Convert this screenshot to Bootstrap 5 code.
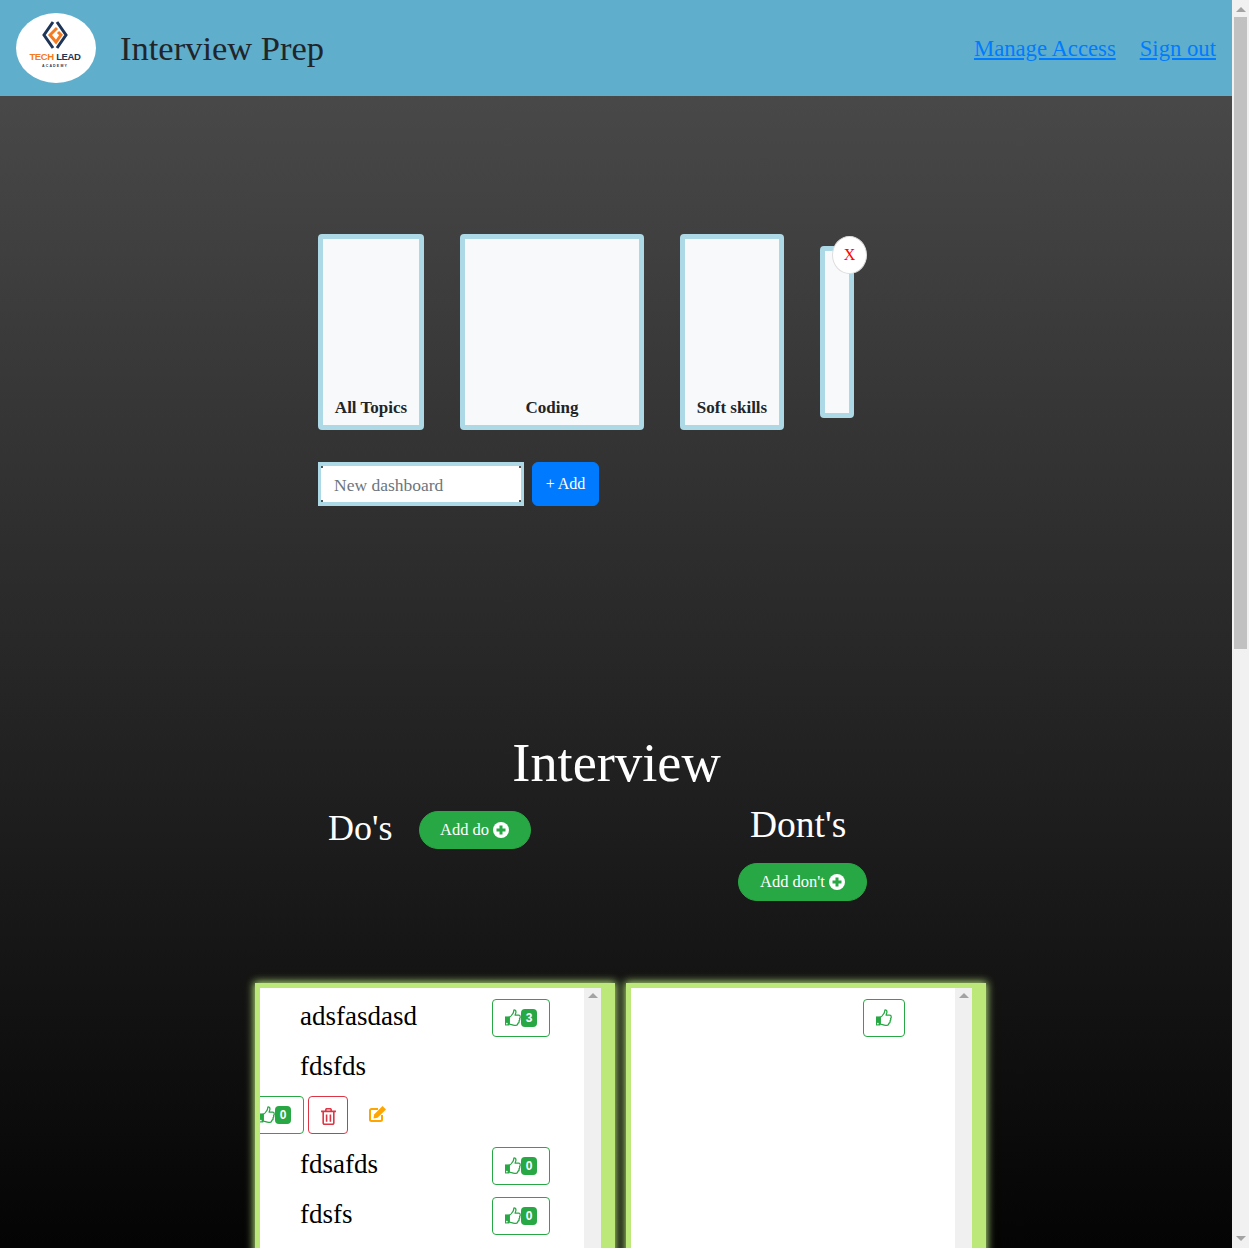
<!DOCTYPE html>
<html lang="en">
<head>
  <meta charset="UTF-8">
  <meta name="viewport" content="width=device-width, initial-scale=1.0">
  <title>Interview Prep</title>
  <link href="https://cdn.jsdelivr.net/npm/bootstrap@5.3.0/dist/css/bootstrap.min.css" rel="stylesheet">
  <script src="https://cdn.jsdelivr.net/npm/bootstrap@5.3.0/dist/js/bootstrap.bundle.min.js"></script>
  <style>
    body {
      font-family: "Liberation Serif", serif;
      background: linear-gradient(#4e4e4e, #040404) fixed;
    }
    .app-shell { height: 100vh; overflow: hidden; }
    .app-col { min-width: 0; }

    /* drawn scrollbars */
    .rail { width: 17px; background: #f1f1f1; padding: 7px 0; }
    .rail-up { width: 0; height: 0; border: 5px solid transparent; border-top: 0; border-bottom-color: #a3a3a3; }
    .rail-down { width: 0; height: 0; border: 5px solid transparent; border-bottom: 0; border-top-color: #a3a3a3; margin-top: auto; }
    .rail-thumb { width: 13px; height: 632px; background: #c1c1c1; margin-top: 5px; }
    .pane-rail { width: 17px; background: #f0f0f0; padding-top: 5px; }

    .top-bar { height: 96px; background: #5faecb; padding: 0 16px; }
    .logo-oval { width: 80px; height: 70px; border-radius: 50%; background: #fff; line-height: 1; padding: 0 2px 8px 0; }
    .logo-main { font: 700 9.5px "Liberation Sans", sans-serif; letter-spacing: -.35px; color: #f47b20; margin-top: 1px; }
    .logo-main span { color: #1f3557; }
    .logo-sub { font: 700 3.5px "Liberation Sans", sans-serif; letter-spacing: 1.2px; color: #1f3557; margin-top: 2px; }
    .app-title { font-size: 34.5px; color: #212529; margin: 2px 0 0 24px; font-weight: 400; }
    .top-nav { padding-top: 2px; }
    .top-link { font-size: 22.7px; color: #007bff; }

    .board-wrap { width: 596px; margin: 0 auto; padding-top: 138px; }
    .board-row { gap: 36px; height: 196px; }
    .board-tile {
      border: 5px solid #add8e6; border-radius: 4px; background: #f8f9fa;
      padding: 0 12px 5px; font-size: 17px; font-weight: 700; color: #212529; white-space: nowrap;
    }
    .tile-a { width: 106px; }
    .tile-b { width: 184px; }
    .tile-c { width: 104px; }
    .tile-d { width: 34px; height: 172px; }
    .tile-close {
      position: absolute; top: -15px; left: 7px; width: 35px; height: 38px; border-radius: 50%;
      background: #fff; border: 1px solid #ddd; color: #f00; font-size: 16px; font-weight: 400;
    }
    .add-row { margin-top: 32px; gap: 8px; }
    .board-input {
      width: 206px; height: 44px; border-style: solid; border-color: #add8e6; border-width: 4px 3px; border-radius: 0;
      padding: 2px 13px 0; font-size: 17.5px; outline: 0;
      background:
        linear-gradient(#555, #555) 0 0 / 2px 2px no-repeat,
        linear-gradient(#555, #555) 100% 0 / 2px 2px no-repeat,
        linear-gradient(#555, #555) 0 100% / 2px 2px no-repeat,
        linear-gradient(#555, #555) 100% 100% / 2px 2px no-repeat,
        #fff;
    }
    .board-input::placeholder { color: #6c757d; }
    .board-add { width: 67px; height: 44px; background: #007bff; border-color: #007bff; font-size: 16px; padding: 0; }

    .page-head { font-size: 54.4px; color: #fff; text-align: center; margin: 226px 0 0 1px; line-height: 62px; font-weight: 400; }
    .col-head { color: #fff; margin: 0; font-weight: 400; line-height: 47px; }
    .head-row { height: 189px; }
    .do-head { padding: 11px 0 0 328px; width: 616px; gap: 26px; }
    .do-head .col-head { font-size: 36px; }
    .do-head .add-pill { margin-top: 6px; padding: 0 20.5px; }
    .dont-head { padding: 7px 0 0 134px; }
    .dont-head .col-head { font-size: 37.5px; }
    .dont-head .add-pill { margin: 15px 0 0 -12px; }
    .add-pill {
      background: #28a745; border-color: #28a745; color: #fff; height: 38px; font-size: 16.5px;
      border-radius: 19px; padding: 0 21px; gap: 4px;
    }
    .pill-icon { width: 16px; height: 16px; }

    .lists-row { padding-left: 255px; gap: 11px; }
    .green-frame {
      width: 360px; height: 700px; background: #bce879; padding: 5px 14px 5px 5px;
      box-shadow: 0 0 8px 1px #b9e87a;
    }
    .list-pane { background: #fff; overflow: hidden; min-width: 0; }
    .item-line { height: 50px; padding: 11px 34px 0 40px; font-size: 27px; color: #000; line-height: 34px; }
    .item-line.tall { height: 98px; }
    .like-btn {
      width: 58px; height: 38px; border: 1px solid #28a745; border-radius: 4px; background: #fff;
      color: #28a745; padding: 0; gap: 0;
    }
    .like-btn svg { width: 17px; height: 17px; margin: -2px -1px 0 0; }
    .like-num {
      background: #28a745; color: #fff; border-radius: 4px; width: 16px; height: 18px;
      font: 700 12px "Liberation Sans", sans-serif;
    }
    .like-solo { width: 42px; margin-right: 16px; }
    .act-row { margin: 13px 0 0 -54px; gap: 4px; height: 38px; }
    .del-btn { width: 40px; height: 38px; border: 1px solid #dc3545; border-radius: 4px; background: #fff; padding: 0; color: #dc3545; }
    .del-btn svg { width: 15px; height: 17px; margin-top: -3px; }
    .edit-mark { width: 17px; height: 16px; margin: -2px 0 0 17px; color: #ffa500; }
  </style>
</head>
<body>
  <!-- thumb icon used by the like buttons -->
  <svg class="d-none">
    <symbol id="thumb" viewBox="0 0 512 512">
      <path fill="currentColor" d="M0 224h130v272H0z"/>
      <circle cx="56" cy="440" r="26" fill="#fff"/>
      <path fill="#fff" stroke="currentColor" stroke-width="38" stroke-linejoin="round" d="M130 236H150C178 236 208 165 235 138C263 110 254 62 273 28C320 28 330 62 330 92C330 131 305 150 305 188H409C436 188 460 210 460 238C460 260 450 275 438 285C452 310 445 340 422 352C432 390 415 425 385 435C390 470 365 490 330 490H292C220 490 180 452 130 452Z"/>
    </symbol>
  </svg>

  <div class="app-shell d-flex">
    <div class="app-col flex-grow-1">
      <header class="top-bar d-flex align-items-center">
        <div class="logo-oval d-flex flex-column align-items-center justify-content-center flex-shrink-0">
          <svg width="26" height="30" viewBox="0 0 26 30">
            <path fill="none" stroke="#1f3557" stroke-width="3" d="M11 2 2 15l9 13M15 2l9 13-9 13"/>
            <path fill="none" stroke="#f47b20" stroke-width="3" d="M15 8 8 15l6 7 5-7-3-3"/>
          </svg>
          <div class="logo-main">TECH <span>LEAD</span></div>
          <div class="logo-sub">ACADEMY</div>
        </div>
        <h1 class="app-title">Interview Prep</h1>
        <nav class="top-nav ms-auto d-flex gap-4">
          <a class="top-link" href="#">Manage Access</a>
          <a class="top-link" href="#">Sign out</a>
        </nav>
      </header>

      <main>
        <section class="board-wrap">
          <div class="board-row d-flex align-items-center">
            <div class="board-tile tile-a h-100 d-flex align-items-end justify-content-center">All Topics</div>
            <div class="board-tile tile-b h-100 d-flex align-items-end justify-content-center">Coding</div>
            <div class="board-tile tile-c h-100 d-flex align-items-end justify-content-center">Soft skills</div>
            <div class="board-tile tile-d position-relative">
              <div class="tile-close d-flex align-items-center justify-content-center">X</div>
            </div>
          </div>
          <form class="add-row d-flex">
            <input class="board-input" type="text" placeholder="New dashboard">
            <button type="button" class="btn btn-primary board-add">+ Add</button>
          </form>
        </section>

        <h2 class="page-head">Interview</h2>
        <div class="head-row d-flex">
          <div class="do-head d-flex align-items-start">
            <h3 class="col-head">Do's</h3>
            <button class="btn add-pill d-flex align-items-center">Add do
              <svg class="pill-icon" viewBox="0 0 16 16"><circle cx="8" cy="8" r="8" fill="#fff"/><path d="M3.5 6.500h3v-3h3v3h3v3h-3v3h-3v-3h-3z" fill="#28a745"/></svg>
            </button>
          </div>
          <div class="dont-head">
            <h3 class="col-head">Dont's</h3>
            <button class="btn add-pill d-flex align-items-center">Add don't
              <svg class="pill-icon" viewBox="0 0 16 16"><circle cx="8" cy="8" r="8" fill="#fff"/><path d="M3.5 6.500h3v-3h3v3h3v3h-3v3h-3v-3h-3z" fill="#28a745"/></svg>
            </button>
          </div>
        </div>

        <div class="lists-row d-flex">
          <div class="green-frame d-flex">
            <div class="list-pane flex-grow-1">
              <div class="item-line d-flex justify-content-between">adsfasdasd
                <button class="like-btn d-flex align-items-center justify-content-center"><svg><use href="#thumb"/></svg><span class="like-num d-flex align-items-center justify-content-center">3</span></button>
              </div>
              <div class="item-line tall">fdsfds
                <div class="act-row d-flex align-items-center">
                  <button class="like-btn flex-shrink-0 d-flex align-items-center justify-content-center"><svg><use href="#thumb"/></svg><span class="like-num d-flex align-items-center justify-content-center">0</span></button>
                  <button class="del-btn flex-shrink-0">
                    <svg viewBox="0 0 14 16" fill="none" stroke="currentColor" stroke-width="1.5"><path d="M0 3.200h14M2 3.200v11a1.200 1.200 0 0 0 1.200 1.200h7.600a1.200 1.200 0 0 0 1.200-1.200v-11M4.500 3V1.600A1 1 0 0 1 5.500.700h3a1 1 0 0 1 1 .900V3M5.200 6v7M8.800 6v7"/></svg>
                  </button>
                  <svg class="edit-mark flex-shrink-0" viewBox="0 0 17 16"><path fill="none" stroke="currentColor" stroke-width="2" d="M9 3H2.500A1.500 1.500 0 0 0 1 4.500v9A1.500 1.500 0 0 0 2.500 15h9a1.500 1.500 0 0 0 1.500-1.500V9"/><path fill="currentColor" d="M13.500 0l3.500 3.400-8.500 8.400-4 .6.600-4z"/></svg>
                </div>
              </div>
              <div class="item-line d-flex justify-content-between">fdsafds
                <button class="like-btn d-flex align-items-center justify-content-center"><svg><use href="#thumb"/></svg><span class="like-num d-flex align-items-center justify-content-center">0</span></button>
              </div>
              <div class="item-line d-flex justify-content-between">fdsfs
                <button class="like-btn d-flex align-items-center justify-content-center"><svg><use href="#thumb"/></svg><span class="like-num d-flex align-items-center justify-content-center">0</span></button>
              </div>
            </div>
            <div class="pane-rail d-flex flex-column align-items-center flex-shrink-0"><div class="rail-up"></div></div>
          </div>
          <div class="green-frame d-flex">
            <div class="list-pane flex-grow-1">
              <div class="item-line d-flex justify-content-end">
                <button class="like-btn like-solo d-flex align-items-center justify-content-center"><svg><use href="#thumb"/></svg></button>
              </div>
            </div>
            <div class="pane-rail d-flex flex-column align-items-center flex-shrink-0"><div class="rail-up"></div></div>
          </div>
        </div>
      </main>
    </div>

    <div class="rail d-flex flex-column align-items-center flex-shrink-0">
      <div class="rail-up"></div>
      <div class="rail-thumb"></div>
      <div class="rail-down"></div>
    </div>
  </div>
</body>
</html>
